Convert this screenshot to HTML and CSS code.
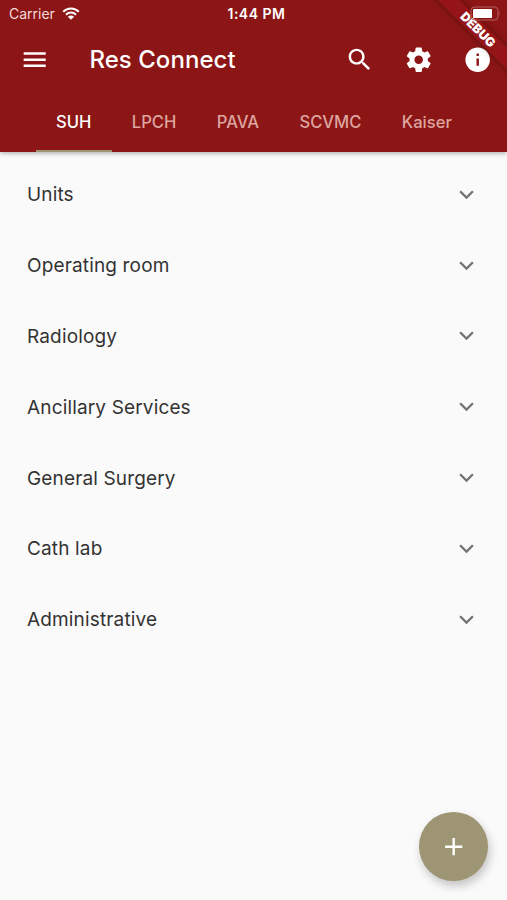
FILE: index.html
```html
<!DOCTYPE html>
<html lang="en">
  <head>
    <meta charset="utf-8" />
    <meta name="viewport" content="width=device-width, initial-scale=1.0" />
    <title>Res Connect</title>
    <link rel="stylesheet" href="styles.css">
  </head>
  <body>
    <header>
      <div class="status">
        <div class="carrier">
          <span>Carrier</span>
          <svg class="wifi" viewBox="0 0 18 13">
            <path d="M1.2 4.8a11 11 0 0 1 15.6 0M4 7.7a7 7 0 0 1 10 0" />
            <path class="dot" d="M9 12.8L5.9 9.7a4.4 4.4 0 0 1 6.2 0z" />
          </svg>
        </div>
        <span class="time">1:44 PM</span>
        <svg class="battery" viewBox="0 0 31 15">
          <rect class="case" x="1" y="1" width="27" height="13" rx="3.5" />
          <rect class="level" x="3" y="3" width="19" height="9" rx="1" />
          <path class="tip" d="M29.3 5.3q1.7 2.2 0 4.4z" />
        </svg>
      </div>

      <div class="toolbar">
        <svg class="icon" viewBox="0 0 24 24">
          <path d="M3 18h18v-2H3v2zm0-5h18v-2H3v2zm0-7v2h18V6H3z" />
        </svg>
        <h1>Res Connect</h1>
        <div class="actions">
          <svg class="icon" viewBox="0 0 24 24">
            <path d="M15.5 14h-.79l-.28-.27C15.41 12.59 16 11.11 16 9.5 16 5.91 13.09 3 9.5 3S3 5.91 3 9.5 5.91 16 9.5 16c1.61 0 3.09-.59 4.23-1.57l.27.28v.79l5 4.99L20.49 19l-4.99-5zm-6 0C7.01 14 5 11.99 5 9.5S7.01 5 9.5 5 14 7.01 14 9.5 11.99 14 9.5 14z" />
          </svg>
          <svg class="icon" viewBox="0 0 24 24">
            <path d="M19.43 12.98c.04-.32.07-.64.07-.98s-.03-.66-.07-.98l2.11-1.65c.19-.15.24-.42.12-.64l-2-3.46c-.12-.22-.39-.3-.61-.22l-2.49 1c-.52-.4-1.08-.73-1.69-.98l-.38-2.65C14.46 2.18 14.25 2 14 2h-4c-.25 0-.46.18-.49.42l-.38 2.65c-.61.25-1.17.59-1.69.98l-2.49-1c-.23-.09-.49 0-.61.22l-2 3.46c-.13.22-.07.49.12.64l2.11 1.65c-.04.32-.07.65-.07.98s.03.66.07.98l-2.11 1.65c-.19.15-.24.42-.12.64l2 3.46c.12.22.39.3.61.22l2.49-1c.52.4 1.08.73 1.69.98l.38 2.65c.03.24.24.42.49.42h4c.25 0 .46-.18.49-.42l.38-2.65c.61-.25 1.17-.59 1.69-.98l2.49 1c.23.09.49 0 .61-.22l2-3.46c.12-.22.07-.49-.12-.64l-2.11-1.65zM12 15.5c-1.93 0-3.5-1.57-3.5-3.5s1.57-3.5 3.5-3.5 3.5 1.57 3.5 3.5-1.57 3.5-3.5 3.5z" />
          </svg>
          <svg class="icon" viewBox="0 0 24 24">
            <path d="M12 2C6.48 2 2 6.48 2 12s4.48 10 10 10 10-4.48 10-10S17.52 2 12 2zm1 15h-2v-6h2v6zm0-8h-2V7h2v2z" />
          </svg>
        </div>
      </div>

      <nav class="tabs">
        <a class="active">SUH</a>
        <a>LPCH</a>
        <a>PAVA</a>
        <a>SCVMC</a>
        <a>Kaiser</a>
      </nav>
    </header>

    <ul class="list">
      <li><span>Units</span><svg class="chevron" viewBox="0 0 24 24"><path d="M16.59 8.59L12 13.17 7.41 8.59 6 10l6 6 6-6z" /></svg></li>
      <li><span>Operating room</span><svg class="chevron" viewBox="0 0 24 24"><path d="M16.59 8.59L12 13.17 7.41 8.59 6 10l6 6 6-6z" /></svg></li>
      <li><span>Radiology</span><svg class="chevron" viewBox="0 0 24 24"><path d="M16.59 8.59L12 13.17 7.41 8.59 6 10l6 6 6-6z" /></svg></li>
      <li><span>Ancillary Services</span><svg class="chevron" viewBox="0 0 24 24"><path d="M16.59 8.59L12 13.17 7.41 8.59 6 10l6 6 6-6z" /></svg></li>
      <li><span>General Surgery</span><svg class="chevron" viewBox="0 0 24 24"><path d="M16.59 8.59L12 13.17 7.41 8.59 6 10l6 6 6-6z" /></svg></li>
      <li><span>Cath lab</span><svg class="chevron" viewBox="0 0 24 24"><path d="M16.59 8.59L12 13.17 7.41 8.59 6 10l6 6 6-6z" /></svg></li>
      <li><span>Administrative</span><svg class="chevron" viewBox="0 0 24 24"><path d="M16.59 8.59L12 13.17 7.41 8.59 6 10l6 6 6-6z" /></svg></li>
    </ul>

    <button class="fab" aria-label="Add">
      <svg class="icon" viewBox="0 0 24 24"><path d="M19 13h-6v6h-2v-6H5v-2h6V5h2v6h6v2z" /></svg>
    </button>

    <div class="corner">
      <div class="banner">DEBUG</div>
    </div>
  </body>
</html>
```
FILE: styles.css
```css
html {
  --color-primary: #8c1515;
  --color-accent: #9d9573;
}

* {
  box-sizing: border-box;
}

body {
  position: relative;
  height: 900px;
  margin: 0;
  overflow: hidden;
  font-family: Inter, 'Liberation Sans', sans-serif;
  background-color: #fafafa;
}

header {
  height: 152.4px;
  color: white;
  background-color: var(--color-primary);
  box-shadow: 0 1px 5px rgba(0, 0, 0, 0.35);
}

/* the system status bar stays above the ribbon */
.status {
  position: relative;
  z-index: 2;
  display: grid;
  grid-template-columns: 1fr auto 1fr;
  align-items: center;
  height: 25px;
  padding: 2px 6px 0 9px;
  font-size: 14px;
}

.carrier {
  display: flex;
  align-items: center;
  gap: 7px;
  color: #f3dada;
}

.time {
  margin-left: 3px;
  font-weight: 600;
  letter-spacing: 0.5px;
}

.wifi {
  width: 18px;
  height: 13px;
  margin-top: -1px;
  fill: none;
  stroke: white;
  stroke-width: 2;
}

.wifi .dot {
  fill: white;
  stroke: none;
}

.battery {
  justify-self: end;
  width: 31px;
  height: 15px;
  margin-top: -1px;
  fill: white;
}

.battery .case {
  fill: none;
  stroke: #b56060;
}

.battery .tip {
  fill: #b56060;
}

.toolbar {
  display: flex;
  align-items: center;
  height: 69px;
  padding: 0 14.6px 0 20.4px;
}

.icon {
  display: block;
  width: 29.4px;
  height: 29.4px;
  fill: currentColor;
}

h1 {
  margin: 0 0 0 39.6px;
  font-size: 24px;
  font-weight: 500;
  letter-spacing: 0.05px;
}

.actions {
  display: flex;
  gap: 29.4px;
  margin-left: auto;
}

.tabs {
  display: flex;
  justify-content: center;
  height: 58.4px;
  padding-left: 1px;
}

.tabs a {
  padding: 0 20.2px;
  font-size: 16.6px;
  font-weight: 500;
  line-height: 56px;
  color: #dda5a0;
}

.tabs .active {
  color: white;
  border-bottom: 2.5px solid var(--color-accent);
}

.list {
  list-style-type: none;
  margin: 0;
  padding: 6.9px 26px 0 27px;
}

.list li {
  display: flex;
  align-items: center;
  justify-content: space-between;
  height: 70.85px;
  font-size: 19px;
  letter-spacing: 0.15px;
  color: #333;
}

.chevron {
  width: 29px;
  height: 29px;
  margin-top: -1px;
  fill: #737373;
}

.fab {
  position: absolute;
  right: 19.5px;
  bottom: 19.5px;
  display: flex;
  align-items: center;
  justify-content: center;
  width: 68.6px;
  height: 68.6px;
  padding: 0;
  border: 0;
  border-radius: 50%;
  color: white;
  background-color: var(--color-accent);
  box-shadow: 2px 5px 10px rgba(0, 0, 0, 0.22);
}

/* diagonal ribbon across the top right corner */
.corner {
  position: absolute;
  top: 0;
  right: 0;
  z-index: 1;
  width: 100px;
  height: 100px;
  overflow: hidden;
  pointer-events: none;
}

.banner {
  width: 142px;
  height: 15px;
  margin: 22px 0 0;
  transform: rotate(45deg);
  font-size: 12.5px;
  font-weight: 900;
  line-height: 15px;
  text-align: center;
  color: white;
  background-color: rgba(150, 20, 24, 0.9);
  box-shadow: 0 0 7px rgba(0, 0, 0, 0.4);
}
```
